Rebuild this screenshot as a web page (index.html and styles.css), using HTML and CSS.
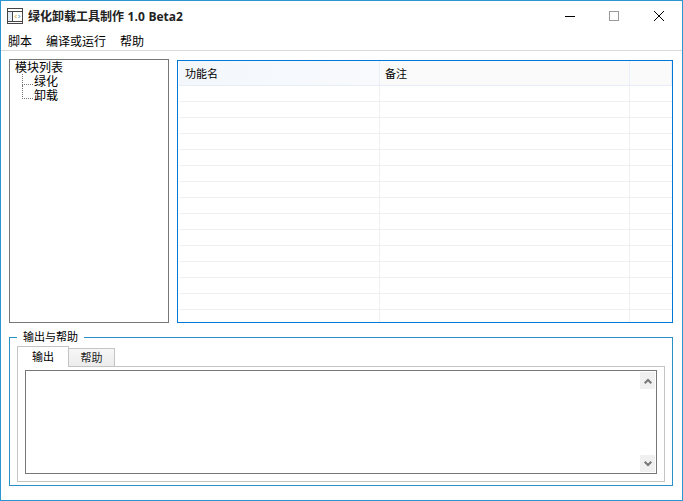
FILE: index.html
```html
<!DOCTYPE html>
<html lang="zh">
<head>
<meta charset="utf-8">
<title>绿化卸载工具制作 1.0 Beta2</title>
<link rel="stylesheet" href="styles.css">
</head>
<body>
<div class="window">
  <header class="titlebar">
    <svg class="app-icon" width="16" height="16" viewBox="0 0 16 16">
      <rect x="0.5" y="0.5" width="15" height="15" fill="#fff" stroke="#444"/>
      <rect x="1" y="4" width="4" height="9" fill="#e4edf6"/>
      <path d="M1 3.5H15M1 13.5H15M5.5 4V13" stroke="#444" fill="none"/>
      <path d="M9.5 7 8 8.5 9.5 10" stroke="#e0a030" fill="none"/>
      <path d="M11.5 7 13 8.5 11.5 10" stroke="#4a90d0" fill="none"/>
    </svg>
    <span class="title">绿化卸载工具制作 1.0 Beta2</span>
    <div class="controls">
      <span class="ctl"><svg width="10" height="10" viewBox="0 0 10 10"><path d="M0 5.5H10" stroke="#000"/></svg></span>
      <span class="ctl"><svg width="10" height="10" viewBox="0 0 10 10"><rect x="0.5" y="0.5" width="9" height="9" fill="none" stroke="#999"/></svg></span>
      <span class="ctl"><svg width="10" height="10" viewBox="0 0 10 10"><path d="M0 0 10 10M10 0 0 10" stroke="#000"/></svg></span>
    </div>
  </header>
  <nav class="menubar">
    <span>脚本</span><span>编译或运行</span><span>帮助</span>
  </nav>
  <main class="panes">
    <div class="tree">
      <div class="tree-root">模块列表</div>
      <div class="tree-item">绿化</div>
      <div class="tree-item">卸载</div>
    </div>
    <div class="table">
      <div class="head">
        <div class="c1">功能名</div><div class="c2">备注</div><div class="c3"></div>
      </div>
      <div class="row"><i class="c1"></i><i class="c2"></i><i class="c3"></i></div>
      <div class="row"><i class="c1"></i><i class="c2"></i><i class="c3"></i></div>
      <div class="row"><i class="c1"></i><i class="c2"></i><i class="c3"></i></div>
      <div class="row"><i class="c1"></i><i class="c2"></i><i class="c3"></i></div>
      <div class="row"><i class="c1"></i><i class="c2"></i><i class="c3"></i></div>
      <div class="row"><i class="c1"></i><i class="c2"></i><i class="c3"></i></div>
      <div class="row"><i class="c1"></i><i class="c2"></i><i class="c3"></i></div>
      <div class="row"><i class="c1"></i><i class="c2"></i><i class="c3"></i></div>
      <div class="row"><i class="c1"></i><i class="c2"></i><i class="c3"></i></div>
      <div class="row"><i class="c1"></i><i class="c2"></i><i class="c3"></i></div>
      <div class="row"><i class="c1"></i><i class="c2"></i><i class="c3"></i></div>
      <div class="row"><i class="c1"></i><i class="c2"></i><i class="c3"></i></div>
      <div class="row"><i class="c1"></i><i class="c2"></i><i class="c3"></i></div>
      <div class="row"><i class="c1"></i><i class="c2"></i><i class="c3"></i></div>
      <div class="row last"><i class="c1"></i><i class="c2"></i><i class="c3"></i></div>
    </div>
  </main>
  <fieldset class="group">
    <legend>输出与帮助</legend>
    <div class="tabs">
      <span class="tab active">输出</span><span class="tab">帮助</span>
    </div>
    <div class="tabpane">
      <div class="output">
        <div class="scroll">
          <span class="sbtn"><svg width="8" height="6" viewBox="0 0 8 6"><path d="M0.7 5.3 4 2 7.3 5.3" fill="none" stroke="#777" stroke-width="2"/></svg></span>
          <span class="sbtn"><svg width="8" height="6" viewBox="0 0 8 6"><path d="M0.7 0.7 4 4 7.3 0.7" fill="none" stroke="#777" stroke-width="2"/></svg></span>
        </div>
      </div>
    </div>
  </fieldset>
</div>
</body>
</html>
```

FILE: styles.css
```css
* { box-sizing: border-box; }
html, body { margin: 0; padding: 0; background: #fff; }
body {
  font-family: "Liberation Sans", "Noto Sans CJK SC", sans-serif;
  font-size: 12px;
  color: #000;
}
.window {
  width: 683px;
  height: 501px;
  border: 1px solid #2b96d0;
  background: #fff;
  display: flex;
  flex-direction: column;
  overflow: hidden;
}
.titlebar {
  height: 29px;
  display: flex;
  align-items: center;
  padding-left: 6px;
  flex: none;
}
.app-icon { flex: none; margin-right: 5px; }
.title {
  font-family: "Open Sans", "Noto Sans CJK SC", sans-serif;
  font-weight: 700;
  font-size: 12px;
  word-spacing: 0.5px;
  color: #222;
}
.controls { margin-left: auto; margin-right: 1px; display: flex; }
.ctl {
  width: 44.5px;
  height: 29px;
  display: flex;
  align-items: center;
  justify-content: center;
}
.menubar {
  height: 21px;
  flex: none;
  display: flex;
  gap: 14px;
  align-items: center;
  padding-left: 7px;
  border-bottom: 1px solid #d9d9d9;
}
.panes {
  display: flex;
  gap: 8px;
  padding: 8px 9px 0 8px;
  height: 273px;
  flex: none;
}
.tree {
  width: 160px;
  height: 264px;
  border: 1px solid #777;
  padding: 1px 0 0 5px;
  line-height: 14px;
  flex: none;
}
.tree-root { height: 14px; }
.tree-item {
  height: 14px;
  padding-left: 19px;
  position: relative;
}
.tree-item::before {
  content: "";
  position: absolute;
  left: 7px;
  top: -1px;
  width: 10px;
  height: 10px;
  border-left: 1px dotted #777;
  border-bottom: 1px dotted #777;
}
.tree-item + .tree-item::before { top: -4px; height: 13px; }
.table {
  flex: 1;
  height: 263px;
  margin-top: 1px;
  border: 1px solid #0078d7;
  padding: 0 0 2px 1px;
  overflow: hidden;
}
.head {
  display: flex;
  height: 25px;
  border-bottom: 1px solid #e6edf6;
  font-size: 11px;
}
.head div {
  height: 24px;
  line-height: 26px;
  padding-left: 5px;
  border-right: 1px solid #e9f0fa;
}
.head .c1 { padding-left: 6px; background: linear-gradient(to right, #f3f7fc, #f8fafd); }
.head .c2, .head .c3 { background: #fafafa; }
.c1 { width: 201px; flex: none; }
.c2 { width: 250px; flex: none; }
.c3 { width: 42px; flex: none; }
.row {
  display: flex;
  height: 16px;
  border-bottom: 1px solid #f0f0f0;
}
.row.last { border-bottom: 0; height: 14px; }
.row i { display: block; border-right: 1px solid #f0f0f0; }
.row .c3 { border-right: 0; }
.group {
  margin: 7px 9px 0 8px;
  padding: 0 7px 10px 7px;
  height: 155px;
  border: 1px solid #2b8fc8;
  min-width: 0;
  flex: none;
  font-size: 11px;
}
.group legend {
  margin-left: 0;
  padding: 0 6px;
  font-size: 11px;
  line-height: 13px;
}
.tabs {
  display: flex;
  height: 22px;
  margin-top: 2px;
  position: relative;
  z-index: 1;
}
.tab {
  width: 46px;
  height: 19px;
  margin-top: 2px;
  text-align: center;
  line-height: 18px;
  border: 1px solid #c4c4c4;
  border-left: 0;
  background: linear-gradient(#f6f6f6, #ececec);
  color: #222;
}
.tab.active {
  width: 52px;
  height: 21px;
  margin-top: 0;
  border-left: 1px solid #c4c4c4;
  border-bottom: 0;
  background: #fff;
  line-height: 21px;
  color: #000;
}
.tabpane {
  height: 116px;
  margin-top: -2px;
  border: 1px solid #c4c4c4;
  padding: 3px 7px 7px 7px;
}
.output {
  height: 104px;
  border: 1px solid #777;
  position: relative;
  background: #fff;
}
.scroll {
  position: absolute;
  right: 1px;
  top: 1px;
  bottom: 1px;
  width: 15px;
  display: flex;
  flex-direction: column;
  justify-content: space-between;
}
.sbtn {
  height: 17px;
  width: 15px;
  background: #f0f0f0;
  display: flex;
  align-items: center;
  justify-content: center;
}
```
